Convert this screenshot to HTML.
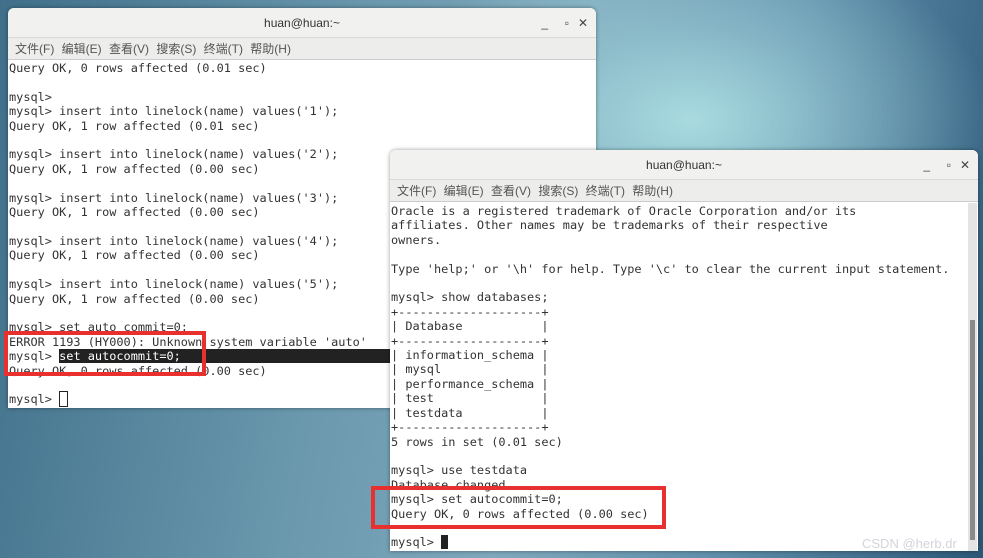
<!DOCTYPE html>
<html><head><meta charset="utf-8"><style>
*{margin:0;padding:0;box-sizing:border-box}
body{width:983px;height:558px;overflow:hidden;position:relative;font-family:"Liberation Sans","Noto Sans CJK SC",sans-serif;
background:radial-gradient(ellipse 300px 190px at 690px 120px,#a8dbe0 0%,rgba(150,200,210,0.6) 50%,rgba(0,0,0,0) 100%),linear-gradient(100deg,#3f6f8a 0%,#6a98ad 35%,#7fa8bc 55%,#5f8fab 75%,#2c5878 100%);}
.win{position:absolute;background:#fff;border-radius:6px 6px 0 0;box-shadow:0 0 4px rgba(0,0,0,.4);overflow:hidden}
.tb{height:30px;background:#f1f1f0;border-bottom:1px solid #d8d8d8;text-align:center;font-size:12px;line-height:30px;color:#333;position:relative}
.tb .c{position:absolute;top:0;font-size:12px;color:#444}
.mb{height:22px;background:#ededec;font-size:12px;line-height:22px;color:#555;padding-left:7px;border-bottom:1px solid #ccc;word-spacing:4px}
pre{position:absolute;font-family:"DejaVu Sans Mono","Liberation Mono",monospace;font-size:11.9px;line-height:14.4px;color:#333}
.hl{background:#222;color:#fff}
.red{position:absolute;border:4px solid #e8302e}
</style></head><body>
<div class="win" style="left:8px;top:8px;width:588px;height:400px">
<div class="tb">huan@huan:~<span class="c" style="right:48px">_</span><span class="c" style="right:27px">▫</span><span class="c" style="right:8px">✕</span></div>
<div class="mb">文件(F) 编辑(E) 查看(V) 搜索(S) 终端(T) 帮助(H)</div>
<pre style="left:1px;top:53px">Query OK, 0 rows affected (0.01 sec)

mysql>
mysql> insert into linelock(name) values('1');
Query OK, 1 row affected (0.01 sec)

mysql> insert into linelock(name) values('2');
Query OK, 1 row affected (0.00 sec)

mysql> insert into linelock(name) values('3');
Query OK, 1 row affected (0.00 sec)

mysql> insert into linelock(name) values('4');
Query OK, 1 row affected (0.00 sec)

mysql> insert into linelock(name) values('5');
Query OK, 1 row affected (0.00 sec)

mysql> set auto commit=0;
ERROR 1193 (HY000): Unknown system variable 'auto'
mysql> <span class="hl">set autocommit=0;                                             </span>
Query OK, 0 rows affected (0.00 sec)

mysql> <span style="border:1px solid #222">&nbsp;</span></pre>
</div>
<div class="red" style="left:4px;top:331px;width:202px;height:45px"></div>
<div class="win" style="left:390px;top:150px;width:588px;height:401px">
<div class="tb">huan@huan:~<span class="c" style="right:48px">_</span><span class="c" style="right:27px">▫</span><span class="c" style="right:8px">✕</span></div>
<div class="mb">文件(F) 编辑(E) 查看(V) 搜索(S) 终端(T) 帮助(H)</div>
<pre style="left:1px;top:54px">Oracle is a registered trademark of Oracle Corporation and/or its
affiliates. Other names may be trademarks of their respective
owners.

Type 'help;' or '\h' for help. Type '\c' to clear the current input statement.

mysql> show databases;
+--------------------+
| Database           |
+--------------------+
| information_schema |
| mysql              |
| performance_schema |
| test               |
| testdata           |
+--------------------+
5 rows in set (0.01 sec)

mysql> use testdata
Database changed
mysql> set autocommit=0;
Query OK, 0 rows affected (0.00 sec)

mysql> <span style="background:#222">&nbsp;</span></pre>
<div style="position:absolute;left:578px;top:53px;width:9px;height:348px;background:#e4e4e4"></div>
<div style="position:absolute;left:580px;top:170px;width:5px;height:220px;background:#8a8a8a"></div>
</div>
<div class="red" style="left:371px;top:486px;width:295px;height:43px"></div>
<div style="position:absolute;left:862px;top:536px;font-size:13px;color:rgba(200,200,210,.8)">CSDN @herb.dr</div>
</body></html>
